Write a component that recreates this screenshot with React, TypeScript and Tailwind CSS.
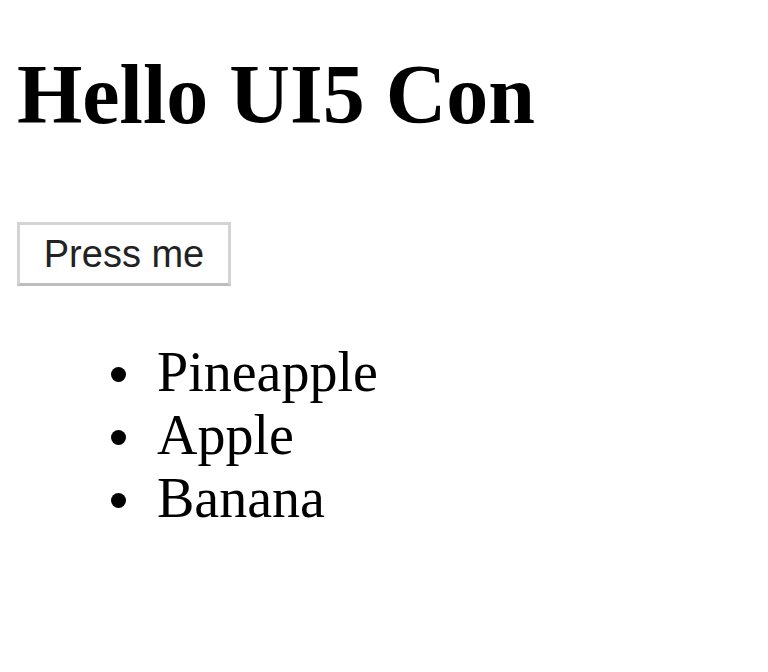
export default function App() {
  const items = ["Pineapple", "Apple", "Banana"];
  return (
    <div className="min-h-[672px] bg-white text-black" style={{ fontFamily: '"Liberation Serif", "Times New Roman", serif' }}>
      <div className="pl-[17px] pt-[53px]">
        <h1 className="m-0 text-[84px] font-bold leading-none">Hello UI5 Con</h1>
        <div className="mt-[85px]">
          <button
            className="box-border flex h-[64px] w-[214px] items-center justify-center border-[3px] border-[#d4d4d4] border-b-[#bdbdbd] bg-white text-[38px] text-[#222222]"
            style={{ fontFamily: '"Liberation Sans", Arial, sans-serif' }}
          >
            Press me
          </button>
        </div>
        <ul className="m-0 mt-[55px] p-0 text-[56px] leading-[63px]">
          {items.map((it) => (
            <li key={it} className="flex items-center">
              <span className="ml-[94px] mr-[31px] mt-[3px] inline-block h-[15px] w-[15px] rounded-full bg-black" />
              <span>{it}</span>
            </li>
          ))}
        </ul>
      </div>
    </div>
  );
}
